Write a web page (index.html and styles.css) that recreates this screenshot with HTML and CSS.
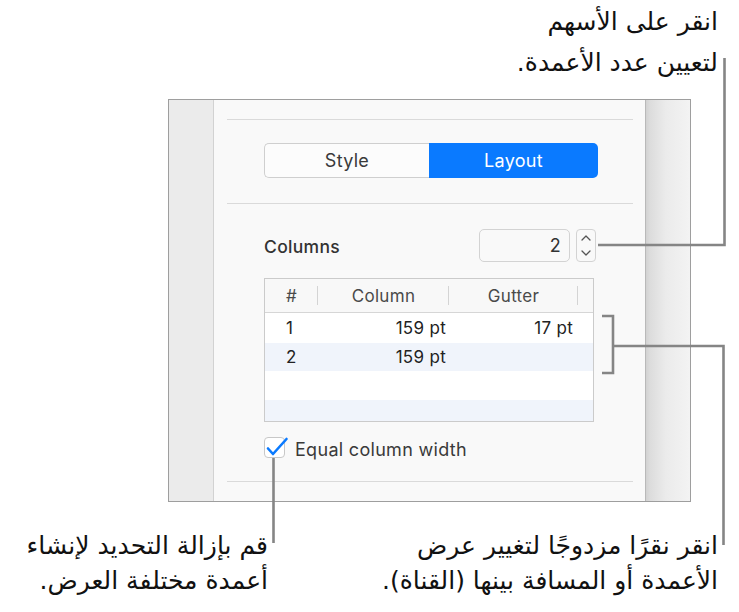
FILE: index.html
```html
<!DOCTYPE html>
<html lang="ar">
<head>
<meta charset="utf-8">
<link rel="stylesheet" href="styles.css">
</head>
<body>
<div class="page">
  <div class="note note-top" dir="rtl">انقر على الأسهم<br>لتعيين عدد الأعمدة.</div>
  <div class="panel">
    <div class="strip-left"></div>
    <div class="content">
      <div class="sep sep1"></div>
      <div class="segmented">
        <div class="seg seg-style">Style</div>
        <div class="seg seg-layout">Layout</div>
      </div>
      <div class="sep sep2"></div>
      <div class="columns-row">
        <div class="label">Columns</div>
        <div class="spin">
          <div class="field">2</div>
          <div class="stepper">
            <svg width="20" height="33" viewBox="0 0 20 33">
              <path d="M6 11 L10 7 L14 11" fill="none" stroke="#555" stroke-width="1.3" stroke-linecap="round" stroke-linejoin="round"/>
              <path d="M6 22 L10 26 L14 22" fill="none" stroke="#555" stroke-width="1.3" stroke-linecap="round" stroke-linejoin="round"/>
            </svg>
          </div>
        </div>
      </div>
      <div class="table">
        <div class="thead">
          <div class="th th-num">#</div>
          <div class="th th-col">Column</div>
          <div class="th th-gut">Gutter</div>
        </div>
        <div class="row row1">
          <div class="td td-num">1</div>
          <div class="td td-col">159 pt</div>
          <div class="td td-gut">17 pt</div>
        </div>
        <div class="row row2 alt">
          <div class="td td-num">2</div>
          <div class="td td-col">159 pt</div>
          <div class="td td-gut"></div>
        </div>
        <div class="row row3"></div>
        <div class="row row4 alt"></div>
      </div>
      <div class="check-row">
        <div class="checkbox">
          <svg width="26" height="22" viewBox="0 0 26 22">
            <path d="M4 11.5 L9 17 L22.5 2" fill="none" stroke="#0a7aff" stroke-width="2.6" stroke-linecap="round" stroke-linejoin="round"/>
          </svg>
        </div>
        <div class="check-label">Equal column width</div>
      </div>
      <div class="sep sep3"></div>
    </div>
    <div class="strip-right"></div>
  </div>
  <div class="notes-bottom">
    <div class="note note-left" dir="rtl">قم بإزالة التحديد لإنشاء<br>أعمدة مختلفة العرض.</div>
    <div class="note note-right" dir="rtl">انقر نقرًا مزدوجًا لتغيير عرض<br>الأعمدة أو المسافة بينها (القناة).</div>
  </div>
  <svg class="callouts" width="739" height="612" viewBox="0 0 739 612">
    <g fill="none" stroke="#858585" stroke-width="2.6">
      <polyline points="598,245 724.5,245 724.5,58"/>
      <polyline points="602,316 613,316 613,373 602,373"/>
      <polyline points="613,346 723.5,346 723.5,545"/>
      <polyline points="273.5,458 273.5,543"/>
    </g>
  </svg>
</div>
</body>
</html>
```
FILE: styles.css
```css
html, body {
  margin: 0;
  padding: 0;
  background: #ffffff;
}

.page {
  position: relative;
  width: 739px;
  height: 612px;
  overflow: hidden;
  background: #ffffff;
}

.note {
  font-family: "DejaVu Sans", sans-serif;
  font-size: 25px;
  color: #111111;
}

.note-top {
  height: 99px;
  box-sizing: border-box;
  padding-right: 21px;
  padding-top: 1px;
  line-height: 41px;
  text-align: right;
}

.panel {
  margin-left: 168px;
  width: 523px;
  height: 403px;
  box-sizing: border-box;
  border: 1px solid #9e9e9e;
  display: flex;
}

.strip-left {
  width: 44px;
  background: #ebebeb;
  border-right: 1px solid #d2d2d2;
}

.content {
  flex: 1;
  background: #f9f9f9;
  padding: 0 12px 0 13px;
  display: flex;
  flex-direction: column;
  font-family: "Inter", "Liberation Sans", sans-serif;
  color: #333333;
  letter-spacing: 0.3px;
}

.strip-right {
  width: 44px;
  border-left: 1px solid #b9b9b9;
  background: linear-gradient(to right, #d2d2d2 0, #dcdcdc 4px, #ebebeb 45%, #f3f3f3 100%);
}

.sep {
  height: 1px;
  background: #dadada;
}

.sep1 { margin-top: 19px; }
.sep2 { margin-top: 25px; }
.sep3 { margin-top: 23px; }

.segmented {
  margin: 23px 0 0 37px;
  width: 334px;
  height: 35px;
  display: flex;
  font-size: 18px;
}

.seg {
  display: flex;
  align-items: center;
  justify-content: center;
  box-sizing: border-box;
}

.seg-style {
  width: 165px;
  background: #fcfcfc;
  border: 1px solid #cfcfcf;
  border-right: none;
  border-radius: 5px 0 0 5px;
  color: #3a3a3a;
}

.seg-layout {
  flex: 1;
  background: #0a7aff;
  border-radius: 0 5px 5px 0;
  color: #ffffff;
}

.columns-row {
  margin: 25px 37px 0 37px;
  height: 33px;
  display: flex;
  align-items: center;
  justify-content: space-between;
}

.label {
  font-size: 17.5px;
  font-weight: 500;
  color: #333333;
  padding-top: 2px;
}

.spin {
  display: flex;
  gap: 6px;
  height: 33px;
}

.field {
  width: 91px;
  box-sizing: border-box;
  border: 1px solid #d3d3d3;
  border-radius: 5px;
  background: #f9f9f9;
  text-align: right;
  padding-right: 8px;
  font-size: 18px;
  line-height: 31px;
  color: #333333;
}

.stepper {
  width: 20px;
  box-sizing: border-box;
  border: 1px solid #d3d3d3;
  border-radius: 4px;
  background: #f9f9f9;
  display: flex;
  align-items: center;
  justify-content: center;
}

.stepper svg {
  display: block;
  flex-shrink: 0;
}

.table {
  margin: 16px 39px 0 37px;
  height: 144px;
  box-sizing: border-box;
  border: 1px solid #cbcbcb;
  overflow: hidden;
  font-size: 17px;
}

.thead {
  height: 33px;
  display: flex;
  align-items: center;
  border-bottom: 1px solid #d6d6d6;
  background: #f8f8f8;
  color: #4a4a4a;
}

.th {
  position: relative;
  height: 100%;
  display: flex;
  align-items: center;
  justify-content: center;
  box-sizing: border-box;
}

.th::after {
  content: "";
  position: absolute;
  right: 0;
  top: 7px;
  bottom: 7px;
  width: 1px;
  background: #d4d4d4;
}

.th-num { width: 53px; justify-content: flex-start; padding-left: 21px; }
.th-col { width: 131px; }
.th-gut { width: 129px; }

.row {
  height: 29px;
  display: flex;
  align-items: center;
  background: #ffffff;
  color: #222222;
}

.row1 { height: 30px; }
.row2 { height: 28px; }

.alt { background: #f0f4fb; }

.td { box-sizing: border-box; }
.td-num { width: 53px; padding-left: 21px; }
.td-col { width: 128px; text-align: right; }
.td-gut { width: 127px; text-align: right; }

.check-row {
  margin: 15px 0 0 37px;
  height: 21px;
  display: flex;
  align-items: center;
  gap: 10px;
}

.checkbox {
  position: relative;
  width: 21px;
  height: 21px;
  box-sizing: border-box;
  border: 1px solid #c8c8c8;
  border-radius: 4px;
  background: #ffffff;
}

.checkbox svg {
  position: absolute;
  left: -1px;
  top: -1px;
}

.check-label {
  font-size: 18px;
  color: #3a3a3a;
  padding-top: 4px;
}

.notes-bottom {
  display: flex;
  justify-content: space-between;
  padding-top: 26px;
  line-height: 35px;
}

.note-left {
  width: 268px;
  text-align: right;
}

.note-right {
  padding-right: 21px;
  text-align: right;
}

.callouts {
  position: absolute;
  left: 0;
  top: 0;
  pointer-events: none;
}
```
